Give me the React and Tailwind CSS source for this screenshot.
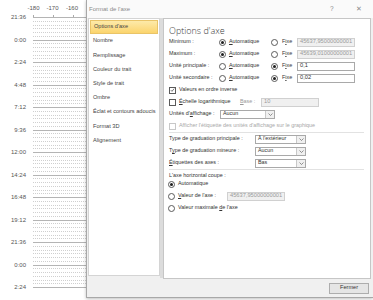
import React from 'react'

const rowLabels = ['21:36', '0:00', '2:24', '4:48', '7:12', '9:36', '12:00', '14:24', '16:48', '19:12', '21:36', '0:00', '2:24']

const navItems = [
  'Options d\'axe',
  'Nombre',
  'Remplissage',
  'Couleur du trait',
  'Style de trait',
  'Ombre',
  'Éclat et contours adoucis',
  'Format 3D',
  'Alignement',
]

const Chart = () => {
  const step = 22.5
  return (
    <div className="w-[86px] h-[300px] shrink-0 bg-white">
      <svg width="86" height="300" viewBox="0 0 86 300">
        <g fontFamily="Liberation Sans, Arial, sans-serif" fontSize="6" fill="#555">
          <text x="33.5" y="10" textAnchor="middle">-180</text>
          <text x="52.5" y="10" textAnchor="middle">-170</text>
          <text x="72" y="10" textAnchor="middle">-160</text>
        </g>
        {[33, 53, 73].map((x) => (
          <line key={x} x1={x + 0.5} y1="15" x2={x + 0.5} y2="17" stroke="#aaa" strokeWidth="1" />
        ))}
        {rowLabels.map((label, i) => {
          const y = 17 + i * step
          return (
            <g key={i}>
              <text x="26" y={y + 2} textAnchor="end" fontFamily="Liberation Sans, Arial, sans-serif" fontSize="6" fill="#555">{label}</text>
              <line x1="33" y1={Math.round(y) + 0.5} x2="86" y2={Math.round(y) + 0.5} stroke="#b4b4b4" strokeWidth="1" />
              {i < rowLabels.length - 1 && [1, 2, 3, 4, 5].map((k) => (
                <line
                  key={k}
                  x1="33"
                  y1={Math.round(y + k * (step / 6)) + 0.5}
                  x2="86"
                  y2={Math.round(y + k * (step / 6)) + 0.5}
                  stroke="#cfcfcf"
                  strokeWidth="1"
                  strokeDasharray="1 1"
                />
              ))}
            </g>
          )
        })}
      </svg>
    </div>
  )
}

const Radio = ({ on }) => (
  <span className="w-[7px] h-[7px] rounded-full border border-[#5a5a5a] bg-white flex items-center justify-center shrink-0">
    {on && <span className="w-[3px] h-[3px] rounded-full bg-[#1e1e1e]" />}
  </span>
)

const Checkbox = ({ on, disabled }) => (
  <span className={`w-[7px] h-[7px] border bg-white flex items-center justify-center shrink-0 ${disabled ? 'border-[#c8c8c8]' : 'border-[#5a5a5a]'}`}>
    {on && (
      <svg width="6" height="6" viewBox="0 0 6 6">
        <path d="M1 3.2 L2.4 4.6 L5 1.3" fill="none" stroke="#333" strokeWidth="0.8" />
      </svg>
    )}
  </span>
)

const Field = ({ value, disabled, className }) => (
  <div className={`h-[9px] border flex items-center px-[2px] text-[5.7px] leading-none overflow-hidden whitespace-nowrap ${disabled ? 'bg-[#f0f0f0] border-[#d0d0d0] text-[#9a9a9a]' : 'bg-white border-[#a9a9a9] text-[#333]'} ${className}`}>
    {value}
  </div>
)

const Select = ({ value, className }) => (
  <div className={`h-[9px] border border-[#a9a9a9] bg-white flex items-center ${className}`}>
    <span className="flex-1 px-[2px] text-[5.4px] leading-none text-[#333]">{value}</span>
    <span className="w-[9px] h-full border-l border-[#c8c8c8] bg-[#f0f0f0] flex items-center justify-center">
      <svg width="5" height="3" viewBox="0 0 5 3">
        <path d="M0.5 0.5 L2.5 2.5 L4.5 0.5" fill="none" stroke="#666" strokeWidth="0.7" />
      </svg>
    </span>
  </div>
)

const AxisRow = ({ label, auto, value }) => (
  <div className="h-[12px] flex items-center">
    <span className="w-[50px]">{label}</span>
    <div className="w-[52px] flex items-center gap-[3px]">
      <Radio on={auto} />
      <span><u>A</u>utomatique</span>
    </div>
    <div className="w-[26px] flex items-center gap-[4px]">
      <Radio on={!auto} />
      <span>F<u>i</u>xe</span>
    </div>
    <Field value={value} disabled={auto} className="w-[58px]" />
  </div>
)

const ContentPanel = () => (
  <div className="w-[208px] h-[261px] border border-[#c6c6c6] bg-white pl-[5px] pr-[4px] text-[5.4px] text-[#333] leading-none whitespace-nowrap">
    <div className="h-[17px] flex items-end pb-[1px] text-[9px] text-[#3a3a3a] font-['Open_Sans','Liberation_Sans',sans-serif] font-light">
      Options d'axe
    </div>
    <AxisRow label="Minimum :" auto value="45637,95000000001" />
    <AxisRow label="Maximum :" auto value="45639,01000000001" />
    <AxisRow label="Unité principale :" value="0,1" />
    <AxisRow label="Unité secondaire :" value="0,02" />
    <div className="h-[12px] flex items-center gap-[3px]">
      <Checkbox on />
      <span>Valeurs en ordre inverse</span>
    </div>
    <div className="h-[12px] flex items-center">
      <div className="w-[71px] flex items-center gap-[3px]">
        <Checkbox />
        <span><u>É</u>chelle logarithmique</span>
      </div>
      <span className="w-[21px] text-[#9a9a9a]"><u>B</u>ase :</span>
      <Field value="10" disabled className="w-[58px]" />
    </div>
    <div className="h-[12px] flex items-center">
      <span className="w-[51px]">Unités d'<u>a</u>ffichage :</span>
      <Select value="Aucun" className="w-[55px]" />
    </div>
    <div className="h-[12px] flex items-center gap-[3px] text-[#a8a8a8]">
      <Checkbox disabled />
      <span>Afficher l'étiquette des unités d'affichage sur le graphique</span>
    </div>
    <div className="h-[1px] bg-[#e2e2e2] mr-[2px]" />
    <div className="h-[12px] flex items-center">
      <span className="w-[86px]">Type de graduation principale :</span>
      <Select value="À l'extérieur" className="w-[51px]" />
    </div>
    <div className="h-[12px] flex items-center">
      <span className="w-[86px]">T<u>y</u>pe de graduation mineure :</span>
      <Select value="Aucun" className="w-[51px]" />
    </div>
    <div className="h-[12px] flex items-center">
      <span className="w-[86px]"><u>É</u>tiquettes des axes :</span>
      <Select value="Bas" className="w-[51px]" />
    </div>
    <div className="h-[1px] bg-[#e2e2e2] mr-[2px]" />
    <div className="h-[8px] flex items-end">L'axe horizontal coupe :</div>
    <div className="h-[12px] flex items-center gap-[3px] -ml-[1px]">
      <Radio on />
      <span>Automatique</span>
    </div>
    <div className="h-[12px] flex items-center -ml-[1px]">
      <div className="w-[59px] flex items-center gap-[3px]">
        <Radio />
        <span><u>V</u>aleur de l'axe :</span>
      </div>
      <Field value="45637,95000000001" disabled className="w-[58px]" />
    </div>
    <div className="h-[12px] flex items-center gap-[3px] -ml-[1px]">
      <Radio />
      <span>Valeur maximale <u>d</u>e l'axe</span>
    </div>
  </div>
)

const Dialog = () => (
  <div className="w-[287px] h-[298px] shrink-0 border-l border-b border-[#a8a8a8] bg-[#f0f0f0] flex flex-col shadow-[0_1px_3px_rgba(0,0,0,0.25)]">
    <div className="h-[18px] bg-[#fafafa] flex items-center pl-[2px] pr-[11px] text-[6px] text-[#8a8a8a]">
      <span className="flex-1">Format de l'axe</span>
      <span className="w-[26px] text-[6.5px]">?</span>
      <span className="text-[7px]">✕</span>
    </div>
    <div className="flex-1 flex pl-[1px]">
      <div className="w-[72px] h-[258px] bg-white border border-[#d4d4d4] pt-[1px] text-[5.6px] text-[#444] leading-none whitespace-nowrap">
        {navItems.map((item, i) => (
          <div
            key={item}
            className={`h-[14.2px] flex items-center pl-[3px] ${i === 0 ? 'mx-[1px] bg-gradient-to-b from-[#fdeaa9] to-[#fbd46c] border border-[#e9c468]' : 'pl-[4px]'}`}
          >
            {item}
          </div>
        ))}
      </div>
      <div className="w-[3px] h-[260px] bg-[#dcdcdc]" />
      <ContentPanel />
    </div>
    <div className="h-[18px] flex items-center justify-end pr-[4px]">
      <button className="w-[40px] h-[11px] bg-[#e5e5e5] border border-[#adadad] text-[5.6px] text-[#333] leading-none">
        Fermer
      </button>
    </div>
  </div>
)

export default function App() {
  return (
    <div className="w-[373px] h-[300px] overflow-hidden bg-white flex font-['Liberation_Sans',Arial,sans-serif]">
      <Chart />
      <Dialog />
    </div>
  )
}
